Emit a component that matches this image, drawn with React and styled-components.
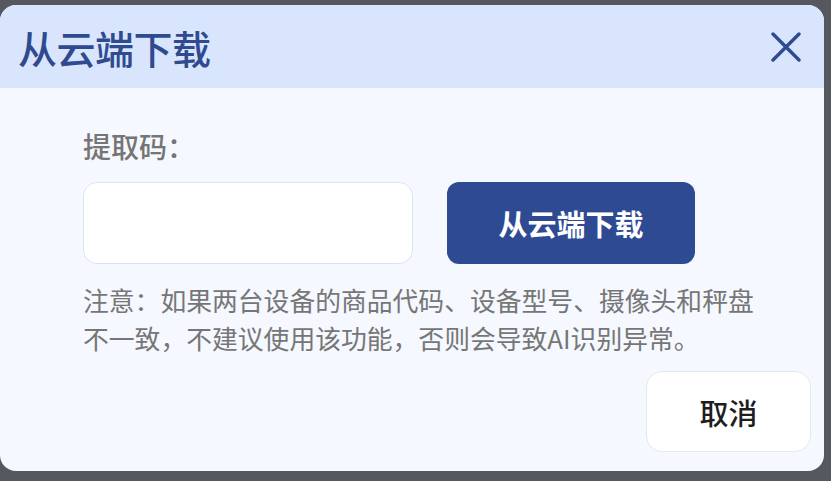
import React, { useState } from "react";
import styled, { createGlobalStyle } from "styled-components";

const GlobalStyle = createGlobalStyle`
  html, body {
    margin: 0;
    padding: 0;
    background: #55585f;
    font-family: "Noto Sans CJK SC", "Noto Sans", sans-serif;
  }
  #root {
    padding-top: 5px;
    height: 481px;
    box-sizing: border-box;
    overflow: hidden;
  }
`;

const Dialog = styled.div`
  width: 824px;
  height: 466px;
  background: #f5f8fe;
  border-radius: 16px;
  overflow: hidden;
  display: flex;
  flex-direction: column;
`;

const Header = styled.div`
  height: 83px;
  background: #d9e5fc;
  display: flex;
  align-items: center;
  justify-content: space-between;
  padding: 0 20px 0 18px;
  flex-shrink: 0;
`;

const Title = styled.h1`
  margin: 0;
  font-size: 39px;
  font-weight: 500;
  letter-spacing: -0.5px;
  color: #2f4a8f;
`;

const CloseButton = styled.button`
  width: 36px;
  height: 36px;
  padding: 0;
  border: none;
  background: transparent;
  display: flex;
  align-items: center;
  justify-content: center;
  cursor: pointer;
`;

const Body = styled.div`
  flex: 1;
  display: flex;
  flex-direction: column;
  padding: 38px 13px 0 83px;
`;

const Label = styled.div`
  font-size: 28px;
  font-weight: 500;
  color: #757575;
  line-height: 40px;
`;

const Row = styled.div`
  display: flex;
  gap: 34px;
  margin-top: 16px;
`;

const CodeInput = styled.input`
  width: 330px;
  height: 82px;
  box-sizing: border-box;
  border: 1px solid #d9e4f6;
  border-radius: 14px;
  background: #ffffff;
  font-size: 24px;
  padding: 0 16px;
  outline: none;
  font-family: inherit;
`;

const PrimaryButton = styled.button`
  width: 248px;
  height: 82px;
  border: none;
  border-radius: 12px;
  background: #2e4a93;
  color: #ffffff;
  font-family: inherit;
  font-size: 29px;
  font-weight: 700;
  cursor: pointer;
`;

const Notice = styled.p`
  margin: 17px 0 0;
  font-size: 25.8px;
  line-height: 38px;
  color: #767676;
  font-weight: 400;
  width: 720px;
`;

const Footer = styled.div`
  display: flex;
  justify-content: flex-end;
  margin-top: 14px;
`;

const CancelButton = styled.button`
  width: 165px;
  height: 81px;
  border: 1px solid #e4e8ef;
  border-radius: 16px;
  background: #ffffff;
  color: #1e1e1e;
  font-family: inherit;
  font-size: 29px;
  font-weight: 500;
  cursor: pointer;
`;

export default function App() {
  const [code, setCode] = useState("");
  return (
    <>
      <GlobalStyle />
      <Dialog>
        <Header>
          <Title>从云端下载</Title>
          <CloseButton aria-label="关闭">
            <svg width="32" height="30" viewBox="0 0 32 30">
              <path
                d="M3 2 L29 28 M29 2 L3 28"
                stroke="#2f4a8f"
                strokeWidth="3.4"
                strokeLinecap="round"
              />
            </svg>
          </CloseButton>
        </Header>
        <Body>
          <Label>提取码：</Label>
          <Row>
            <CodeInput value={code} onChange={(e) => setCode(e.target.value)} />
            <PrimaryButton>从云端下载</PrimaryButton>
          </Row>
          <Notice>
            注意：如果两台设备的商品代码、设备型号、摄像头和秤盘
            <br />
            不一致，不建议使用该功能，否则会导致AI识别异常。
          </Notice>
          <Footer>
            <CancelButton>取消</CancelButton>
          </Footer>
        </Body>
      </Dialog>
    </>
  );
}
